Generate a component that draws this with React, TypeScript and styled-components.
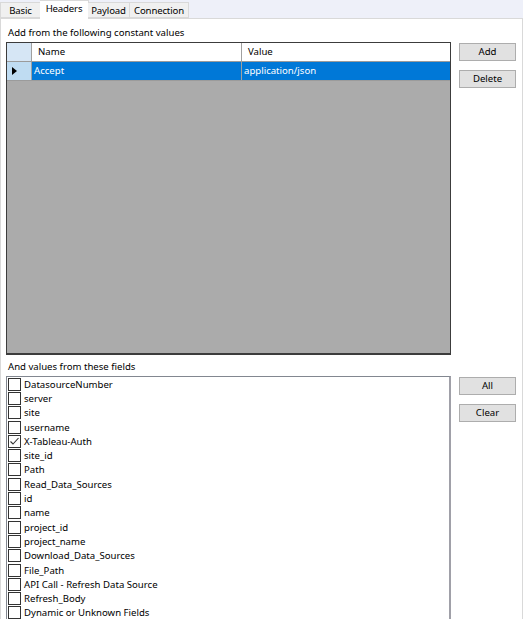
import React from 'react';
import styled, { createGlobalStyle } from 'styled-components';

const GlobalStyle = createGlobalStyle`
  html, body {
    margin: 0;
    padding: 0;
    background: #eef0f9;
  }
  body {
    font-family: "Noto Sans", "Open Sans", sans-serif;
    font-size: 9.6px;
    color: #000;
  }
`;

const TABS = [
  { label: 'Basic', width: 41 },
  { label: 'Headers', width: 49 },
  { label: 'Payload', width: 42 },
  { label: 'Connection', width: 59 },
];

const FIELDS = [
  'DatasourceNumber',
  'server',
  'site',
  'username',
  'X-Tableau-Auth',
  'site_id',
  'Path',
  'Read_Data_Sources',
  'id',
  'name',
  'project_id',
  'project_name',
  'Download_Data_Sources',
  'File_Path',
  'API Call - Refresh Data Source',
  'Refresh_Body',
  'Dynamic or Unknown Fields',
];

const CHECKED = new Set(['X-Tableau-Auth']);

export default function App() {
  return (
    <>
      <GlobalStyle />
      <Window>
        <TabStrip>
          {TABS.map(t => (
            <Tab key={t.label} width={t.width} selected={t.label === 'Headers'}>
              {t.label}
            </Tab>
          ))}
        </TabStrip>
        <Panel>
          <Caption>Add from the following constant values</Caption>
          <Section>
            <Grid>
              <HeaderRow>
                <RowHead />
                <HeadCell width={210}>Name</HeadCell>
                <HeadCell>Value</HeadCell>
              </HeaderRow>
              <DataRow>
                <RowHead active>
                  <svg width="5" height="8" viewBox="0 0 5 8">
                    <path d="M0 0 L5 4 L0 8 Z" fill="#000" />
                  </svg>
                </RowHead>
                <Cell width={210}>Accept</Cell>
                <Cell>application/json</Cell>
              </DataRow>
            </Grid>
            <Buttons>
              <Button>Add</Button>
              <Button>Delete</Button>
            </Buttons>
          </Section>
          <Caption>And values from these fields</Caption>
          <Section>
            <ListBox>
              {FIELDS.map(f => (
                <Item key={f}>
                  <Box>
                    {CHECKED.has(f) && (
                      <svg width="11" height="11" viewBox="0 0 11 11">
                        <path d="M1.5 5.5 L4 8 L9.5 2" fill="none" stroke="#333" strokeWidth="1.1" />
                      </svg>
                    )}
                  </Box>
                  {f}
                </Item>
              ))}
            </ListBox>
            <Buttons>
              <Button>All</Button>
              <Button>Clear</Button>
            </Buttons>
          </Section>
        </Panel>
      </Window>
    </>
  );
}

const Window = styled.div`
  width: 523px;
  height: 619px;
  overflow: hidden;
  display: flex;
  flex-direction: column;
`;

const TabStrip = styled.div`
  display: flex;
  align-items: flex-end;
  height: 18px;
  position: relative;
  z-index: 1;
`;

const Tab = styled.div<{ selected?: boolean; width: number }>`
  box-sizing: border-box;
  width: ${p => p.width}px;
  height: ${p => (p.selected ? '19px' : '16px')};
  margin-left: ${p => (p.selected ? '-1px' : '0')};
  margin-right: ${p => (p.selected ? '-1px' : '0')};
  margin-bottom: ${p => (p.selected ? '-1px' : '0')};
  background: ${p => (p.selected ? '#fff' : '#f0f0f0')};
  border: 1px solid #d9d9d9;
  border-bottom: ${p => (p.selected ? 'none' : '1px solid #d9d9d9')};
  text-align: center;
  line-height: 16px;
  letter-spacing: -0.15px;
  white-space: nowrap;
  & + & {
    border-left: ${p => (p.selected ? '1px solid #d9d9d9' : 'none')};
  }
`;

const Panel = styled.div`
  flex: 1;
  background: #fff;
  border: 1px solid #d9d9d9;
  border-bottom: none;
  padding: 6px 0 0 5px;
  display: flex;
  flex-direction: column;
  min-height: 0;
`;

const Caption = styled.div`
  height: 17px;
  padding-left: 2px;
  line-height: 15px;
`;

const Section = styled.div`
  display: grid;
  grid-template-columns: 445px 57px;
  column-gap: 8px;
  align-items: start;
  margin-bottom: 4px;
  &:last-child {
    flex: 1;
    margin-bottom: 0;
    min-height: 0;
  }
`;

const Grid = styled.div`
  box-sizing: border-box;
  height: 313px;
  border: 1px solid #3c3c3c;
  border-bottom-width: 2px;
  background: #ababab;
`;

const HeaderRow = styled.div`
  display: flex;
  height: 18px;
  background: #fff;
  border-bottom: 1px solid #9b9b9b;
`;

const DataRow = styled.div`
  display: flex;
  height: 18px;
  border-bottom: 1px solid #9b9b9b;
`;

const RowHead = styled.div<{ active?: boolean }>`
  box-sizing: border-box;
  width: 25px;
  flex: none;
  background: ${p => (p.active ? '#bfdcf2' : '#d6e6f5')};
  border-right: 1px solid #a0a0a0;
  display: flex;
  align-items: center;
  padding-left: 5px;
`;

const HeadCell = styled.div<{ width?: number }>`
  box-sizing: border-box;
  width: ${p => (p.width ? `${p.width}px` : 'auto')};
  flex: ${p => (p.width ? 'none' : '1')};
  padding-left: 6px;
  line-height: 17px;
  border-right: ${p => (p.width ? '1px solid #a0a0a0' : 'none')};
`;

const Cell = styled.div<{ width?: number }>`
  box-sizing: border-box;
  width: ${p => (p.width ? `${p.width}px` : 'auto')};
  flex: ${p => (p.width ? 'none' : '1')};
  padding-left: 2px;
  line-height: 17px;
  background: #0078d7;
  color: #fff;
  border-right: ${p => (p.width ? '1px solid #a0a0a0' : 'none')};
`;

const Buttons = styled.div`
  display: flex;
  flex-direction: column;
  gap: 9px;
  padding-top: 1px;
`;

const Button = styled.div`
  box-sizing: border-box;
  height: 18px;
  background: #e1e1e1;
  border: 1px solid #adadad;
  text-align: center;
  line-height: 15px;
`;

const ListBox = styled.div`
  box-sizing: border-box;
  height: 260px;
  border: 1px solid #828790;
  border-right: 2px solid #a0a0a8;
  padding: 0 0 0 1px;
  overflow: hidden;
`;

const Item = styled.div`
  display: flex;
  align-items: center;
  gap: 3px;
  height: 14.3px;
  white-space: nowrap;
`;

const Box = styled.span`
  box-sizing: border-box;
  width: 13px;
  height: 13px;
  border: 1px solid #333;
  background: #fff;
  display: flex;
  align-items: center;
  justify-content: center;
  flex: none;
`;
